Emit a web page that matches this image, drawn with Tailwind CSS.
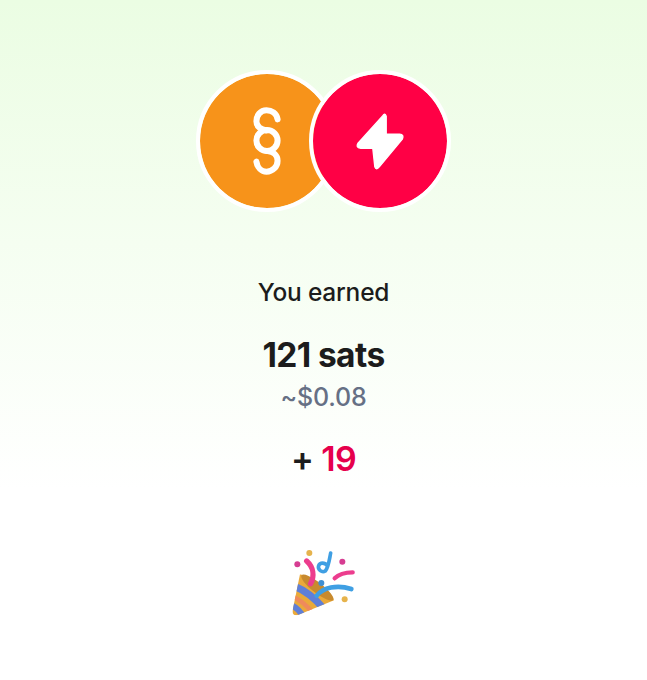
<!DOCTYPE html>
<html lang="en">
<head>
    <meta charset="UTF-8">
    <meta name="viewport" content="width=device-width, initial-scale=1.0">
    <title>You earned</title>
    <script src="https://cdn.jsdelivr.net/npm/@tailwindcss/browser@4"></script>
</head>
<body>
    <main class="h-[680px] overflow-hidden bg-linear-to-b from-[#ebfde3] to-white to-[72%] flex flex-col items-center font-['Inter',sans-serif] text-[#1c1c1c]">
        <!-- coin logos -->
        <div class="flex mt-[70px]">
            <div class="w-[142px] h-[142px] rounded-full bg-[#f7931a] bg-clip-padding border-[4.5px] border-white shrink-0">
                <svg viewBox="0 0 133 133" class="w-full h-full" fill="none" stroke="#fff" stroke-width="6" stroke-linecap="round">
                    <path d="M77 45C76 39 71 36 66 36C60 36 56 41 56 47C56 52 60 55 66 56"/>
                    <circle cx="66.500" cy="66" r="10.500"/>
                    <path d="M56 87C57 93 61 97 66 97C72 97 77 92 77 86C77 81 73 77 67 76.500"/>
                </svg>
            </div>
            <div class="w-[142px] h-[142px] rounded-full bg-[#ff0045] bg-clip-padding border-[4.5px] border-white -ml-[29px] shrink-0 relative">
                <svg viewBox="372 42 399 399" class="w-full h-full">
                    <path d="M580 166L506 248Q498 262 514 263L550 263L556 318Q560 330 570 318L638 236Q644 222 630 221L590 221L590 168Q586 156 580 166Z" fill="#fff" stroke="#fff" stroke-width="4" stroke-linejoin="round"/>
                </svg>
            </div>
        </div>

        <p class="mt-[64px] text-[24.500px] leading-[32px] font-medium tracking-[-0.2px]">You earned</p>
        <p class="mt-[26px] text-[33.500px] leading-[42px] font-bold tracking-[-0.6px]">121 sats</p>
        <p class="mt-[5px] text-[25px] leading-[32px] font-medium text-[#667085] tracking-[-0.2px]">~$0.08</p>
        <p class="mt-[24px] text-[34px] leading-[44px] font-semibold tracking-[-0.6px]">+ <span class="text-[#e6004c]">19</span></p>

        <!-- party popper -->
        <svg viewBox="0 0 270 270" class="w-[90px] h-[90px] mt-[58px] ml-[3px]" fill="none" stroke-linecap="round">
            <defs>
                <clipPath id="cone"><path d="M60 106C90 112 150 150 162 184L54 228Q36 232 38 214Z"/></clipPath>
            </defs>
            <g clip-path="url(#cone)">
                <rect x="20" y="90" width="160" height="150" fill="#eaa93a"/>
                <path d="M44 142Q90 160 130 208" stroke="#5f7fd8" stroke-width="22"/>
                <path d="M36 172Q70 186 98 222" stroke="#ef8a5c" stroke-width="14"/>
                <path d="M30 196Q56 208 72 236" stroke="#5f7fd8" stroke-width="18"/>
            </g>
            <ellipse cx="112" cy="146" rx="16" ry="60" transform="rotate(-52 112 146)" fill="#c88a2e"/>
            <path d="M80 66C100 84 104 110 92 134" stroke="#ec3d8e" stroke-width="16"/>
            <path d="M152 42C148 62 146 84 136 96C126 102 112 92 116 80C120 70 134 70 142 80" stroke="#3f9fe3" stroke-width="11"/>
            <path d="M164 118C178 104 200 100 218 100" stroke="#ec3d8e" stroke-width="13"/>
            <path d="M110 170C130 146 170 136 214 150" stroke="#3f9fe3" stroke-width="14"/>
            <circle cx="88" cy="42" r="9" fill="#e6b34c"/>
            <circle cx="52" cy="76" r="9" fill="#d63d92"/>
            <circle cx="187" cy="68" r="9" fill="#d63d92"/>
            <circle cx="124" cy="132" r="9" fill="#3f8fd3"/>
            <circle cx="194" cy="181" r="9" fill="#e6b34c"/>
        </svg>
    </main>
</body>
</html>
